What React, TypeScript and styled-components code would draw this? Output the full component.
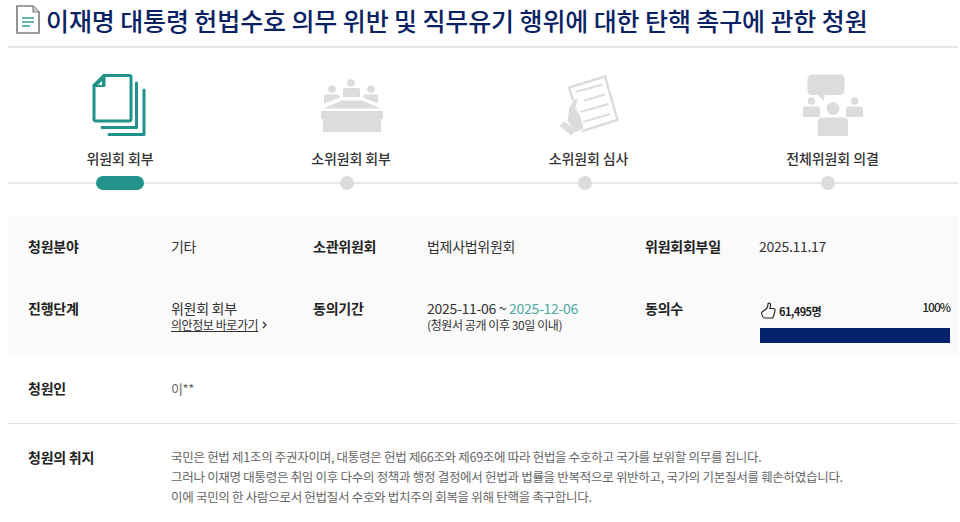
import React from "react";
import styled, { createGlobalStyle } from "styled-components";

const Global = createGlobalStyle`
  html, body { margin: 0; padding: 0; background: #fff; }
  body { font-family: "Noto Sans CJK KR", "Noto Sans", sans-serif; color: #222; overflow: hidden; }
`;

const Page = styled.div`
  width: 960px;
  height: 522px;
  padding: 0 2px 0 8px;
  box-sizing: border-box;
  overflow: hidden;
`;

const Header = styled.header`
  height: 48px;
  box-sizing: border-box;
  padding: 4px 0 0 8px;
  display: flex;
  align-items: flex-start;
  gap: 6px;
  border-bottom: 2px solid #e6e6e6;
`;

const Title = styled.h1`
  margin: 0;
  font-size: 25px;
  line-height: 32px;
  font-weight: 500;
  letter-spacing: -0.11px;
  color: #0a2263;
  white-space: nowrap;
`;

const Steps = styled.section`
  display: grid;
  grid-template-columns: 224px 238px 237px 251px;
  padding-top: 22px;
`;

const Step = styled.div`
  display: flex;
  flex-direction: column;
  align-items: center;
`;

const StepIcon = styled.svg`
  display: block;
  width: 64px;
  height: 70px;
`;

const StepLabel = styled.div`
  margin-top: 8px;
  font-size: 14px;
  line-height: 20px;
  font-weight: 500;
  letter-spacing: -0.1px;
  color: #333;
  white-space: nowrap;
`;

const Track = styled.div`
  position: relative;
  margin-top: 8px;
  height: 14px;
  display: grid;
  grid-template-columns: 224px 230px 246px 240px;
  justify-items: center;
  &::before {
    content: "";
    position: absolute;
    left: 0;
    right: 0;
    top: 6px;
    height: 2px;
    background: #e9e9e9;
  }
`;

const Marker = styled.span<{ $active?: boolean }>`
  position: relative;
  display: block;
  width: ${(p) => (p.$active ? "48px" : "14px")};
  height: 14px;
  border-radius: 7px;
  background: ${(p) => (p.$active ? "#21938b" : "#dcdcdc")};
`;

const Panel = styled.section`
  margin-top: 26px;
  height: 140px;
  box-sizing: border-box;
  background: #fafafa;
  padding: 19px 8px 0 20px;
  display: grid;
  grid-template-columns: 143px 142px 114px 218px 114px 1fr;
  grid-template-rows: 62px 1fr;
`;

const Label = styled.div`
  font-size: 14px;
  line-height: 22px;
  font-weight: 700;
  letter-spacing: -0.25px;
  color: #222;
  white-space: nowrap;
`;

const Value = styled.div`
  font-size: 14px;
  line-height: 22px;
  font-weight: 400;
  letter-spacing: -0.3px;
  color: #333;
  white-space: nowrap;
`;

const StackValue = styled(Value)`
  margin-top: 1px;
  line-height: 20px;
`;

const SubLine = styled.div`
  display: flex;
  align-items: center;
  gap: 4px;
  font-size: 12px;
  line-height: 14px;
  letter-spacing: -0.42px;
  color: #333;
  white-space: nowrap;
`;

const LinkText = styled.a`
  color: #333;
  text-decoration: underline;
  text-underline-offset: 1px;
`;

const EndDate = styled.span`
  color: #4aa9a3;
`;

const Votes = styled.div`
  padding-left: 1px;
`;

const VoteHead = styled.div`
  display: flex;
  align-items: flex-start;
  justify-content: space-between;
  height: 31px;
`;

const VoteCount = styled.div`
  display: flex;
  align-items: center;
  gap: 3px;
  padding-left: 1px;
  padding-top: 5px;
  font-size: 11px;
  line-height: 16px;
  font-weight: 700;
  letter-spacing: -0.6px;
  color: #222;
`;

const Percent = styled.div`
  padding-top: 2px;
  font-size: 12px;
  line-height: 16px;
  font-weight: 500;
  letter-spacing: -1px;
  color: #222;
`;

const Bar = styled.div`
  height: 15px;
  background: #06216b;
`;

const Row = styled.section<{ $height: number; $top: number; $line?: boolean }>`
  height: ${(p) => p.$height}px;
  box-sizing: border-box;
  padding: ${(p) => p.$top}px 0 0 20px;
  display: grid;
  grid-template-columns: 143px 1fr;
  border-bottom: ${(p) => (p.$line ? "1px solid #e4e4e4" : "none")};
`;

const Body = styled.div`
  margin-top: 1px;
  font-size: 12.5px;
  line-height: 20px;
  letter-spacing: -0.29px;
  color: #666;
  white-space: nowrap;
`;

const Muted = styled(Value)`
  margin-top: 1px;
  color: #666;
  font-size: 13px;
  letter-spacing: -0.4px;
`;

const G = "#dcdcdc";
const T = "#21938b";

const TitleIcon = () => (
  <svg width="24" height="29" viewBox="0 0 24 29" fill="none" style={{ flex: "none", marginTop: 1 }}>
    <path d="M1 1h16l6 6v21H1z" fill="#fff" stroke="#808080" strokeWidth="1.7" />
    <path d="M17 1v6h6" fill="#cfcfcf" stroke="#808080" strokeWidth="1.2" />
    <path d="M6 13h12M6 17h12M6 21h8" stroke="#2f9f97" strokeWidth="1.5" />
  </svg>
);

const DocsIcon = () => (
  <StepIcon viewBox="88 70 64 70" fill="none">
    <path d="M104 75.500h25.500a1.500 1.500 0 0 1 1.500 1.500v42.500a1.500 1.500 0 0 1-1.500 1.500H95.500a1.500 1.500 0 0 1-1.500-1.500V85.500z" stroke={T} strokeWidth="3" strokeLinejoin="round" />
    <path d="M94 85.500h10v-10z" fill={T} stroke={T} strokeWidth="3" strokeLinejoin="round" />
    <path d="M98 85l4-4v4z" fill="#fff" />
    <path d="M136.500 83v44.500h-34.500M144 90v44.500h-35" stroke={T} strokeWidth="3" strokeLinecap="round" strokeLinejoin="round" />
  </StepIcon>
);

const TableIcon = () => (
  <StepIcon viewBox="319 70 64 70" fill={G}>
    <circle cx="332" cy="89" r="3.800" />
    <circle cx="351" cy="83" r="3.800" />
    <circle cx="371" cy="89" r="3.800" />
    <path d="M345 88h13a2 2 0 0 1 2 2v7h-17v-7a2 2 0 0 1 2-2z" />
    <path d="M326 94.500h9c3 0 5 1 5 3l-16 6v-7a2 2 0 0 1 2-2z" />
    <path d="M367 94.500h9a2 2 0 0 1 2 2v7l-15-6c0-2 1-3 4-3z" />
    <path d="M323 108.500l19-8h20l19 8z" />
    <path d="M321 111h62v8h-2v13h-58v-13h-2z" />
  </StepIcon>
);

const PaperIcon = () => (
  <StepIcon viewBox="557 70 64 70" fill="none">
    <path d="M569 87.500l36-11 12.500 43.500-35 11z" stroke={G} strokeWidth="2.400" />
    <path d="M575.500 92l27-7.500M584 100.500l21-6M580.500 112l28-8M583 122l27-8" stroke={G} strokeWidth="2" />
    <path d="M575 98.500h3.500l-3 10 5 7 3.500 13.500-8.500 3.500-8.500-11.500 2-13.500z" fill={G} stroke="#fff" strokeWidth="1" />
    <path d="M559.500 126l5-4.500 11.500 9-5 5z" fill={G} />
  </StepIcon>
);

const TalkIcon = () => (
  <StepIcon viewBox="800 70 64 70" fill={G}>
    <path d="M811 74.500h28a4.500 4.500 0 0 1 4.500 4.500v11.500a4.500 4.500 0 0 1-4.500 4.500h-15.500l-.5 6-6-6h-6a4.500 4.500 0 0 1-4.500-4.500V79a4.500 4.500 0 0 1 4.500-4.500z" />
    <circle cx="832" cy="108.500" r="6.500" />
    <path d="M821 117.500h22a4 4 0 0 1 4 4V136h-30v-14.500a4 4 0 0 1 4-4z" />
    <circle cx="810.300" cy="101" r="3.700" />
    <path d="M804 106.500h12a3 3 0 0 1 3 3v7.500h-17v-8.500a2 2 0 0 1 2-2z" />
    <circle cx="853.700" cy="101" r="3.700" />
    <path d="M848 106.500h12a2 2 0 0 1 2 2v8.500h-17v-7.500a3 3 0 0 1 3-3z" />
  </StepIcon>
);

const ThumbIcon = () => (
  <svg width="15" height="17" viewBox="0 0 15 17" fill="none" stroke="#222" strokeWidth="1.100" strokeLinejoin="round">
    <path d="M4.500 7.500c1.500-1 2.500-3 2.500-5.500 0-1.300 2.300-1.300 2.500.5.200 1.500-.3 3-.7 4h3.700c1.300 0 1.800 1.200 1.500 2.200l-1.500 5.800c-.3 1-1 1.500-2 1.500H4c-1 0-1.500-.5-2-1.200L1 13c-.5-1-.5-2 0-3z" />
  </svg>
);

const Chevron = () => (
  <svg width="5" height="8" viewBox="0 0 5 8" fill="none" stroke="#333" strokeWidth="1.300">
    <path d="M1 1l3 3-3 3" />
  </svg>
);

const steps = [
  { label: "위원회 회부", icon: <DocsIcon /> },
  { label: "소위원회 회부", icon: <TableIcon /> },
  { label: "소위원회 심사", icon: <PaperIcon /> },
  { label: "전체위원회 의결", icon: <TalkIcon /> },
];

export default function App() {
  return (
    <Page>
      <Global />
      <Header>
        <TitleIcon />
        <Title>이재명 대통령 헌법수호 의무 위반 및 직무유기 행위에 대한 탄핵 촉구에 관한 청원</Title>
      </Header>
      <Steps>
        {steps.map((s) => (
          <Step key={s.label}>
            {s.icon}
            <StepLabel>{s.label}</StepLabel>
          </Step>
        ))}
      </Steps>
      <Track>
        {steps.map((s, i) => (
          <Marker key={s.label} $active={i === 0} />
        ))}
      </Track>
      <Panel>
        <Label>청원분야</Label>
        <Value>기타</Value>
        <Label>소관위원회</Label>
        <Value>법제사법위원회</Value>
        <Label>위원회회부일</Label>
        <Value>2025.11.17</Value>
        <Label>진행단계</Label>
        <div>
          <StackValue>위원회 회부</StackValue>
          <SubLine>
            <LinkText href="#">의안정보 바로가기</LinkText>
            <Chevron />
          </SubLine>
        </div>
        <Label>동의기간</Label>
        <div>
          <StackValue>
            2025-11-06 ~ <EndDate>2025-12-06</EndDate>
          </StackValue>
          <SubLine>(청원서 공개 이후 30일 이내)</SubLine>
        </div>
        <Label>동의수</Label>
        <Votes>
          <VoteHead>
            <VoteCount>
              <ThumbIcon />
              61,495명
            </VoteCount>
            <Percent>100%</Percent>
          </VoteHead>
          <Bar />
        </Votes>
      </Panel>
      <Row $height={68} $top={21} $line>
        <Label>청원인</Label>
        <Muted>이**</Muted>
      </Row>
      <Row $height={99} $top={22}>
        <Label>청원의 취지</Label>
        <Body>
          국민은 헌법 제1조의 주권자이며, 대통령은 헌법 제66조와 제69조에 따라 헌법을 수호하고 국가를 보위할 의무를 집니다.
          <br />
          그러나 이재명 대통령은 취임 이후 다수의 정책과 행정 결정에서 헌법과 법률을 반복적으로 위반하고, 국가의 기본질서를 훼손하였습니다.
          <br />
          이에 국민의 한 사람으로서 헌법질서 수호와 법치주의 회복을 위해 탄핵을 촉구합니다.
        </Body>
      </Row>
    </Page>
  );
}
